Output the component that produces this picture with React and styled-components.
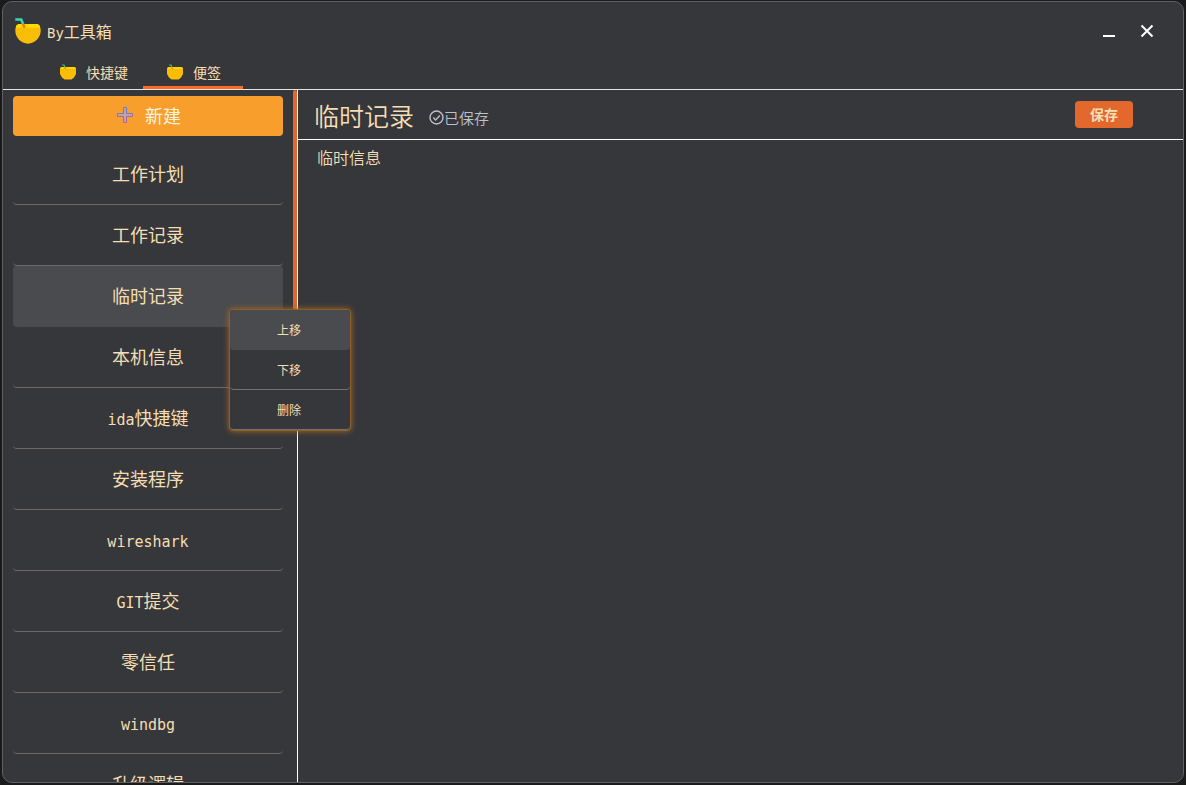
import React, { useState } from "react";
import styled, { createGlobalStyle } from "styled-components";

const c = {
  bg: "#36373a",
  hover: "#4a4b4e",
  wheat: "#f5deb3",
  line: "#6f695f",
  orange: "#e2682e",
};

const Global = createGlobalStyle`
  *, *::before, *::after { box-sizing: border-box; }
  html, body, #root { height: 100%; }
  body {
    margin: 0;
    background: #1b1b1c;
    color: ${c.wheat};
    font: 16px/24px "Noto Sans CJK SC", "Noto Sans", sans-serif;
  }
  #root { padding: 1px 2px 2px; }
  button, textarea { font: inherit; color: inherit; }
  button { border: 0; padding: 0; margin: 0; background: none; cursor: pointer; }
`;

const Window = styled.div`
  position: relative;
  display: flex;
  flex-direction: column;
  height: 100%;
  overflow: hidden;
  background: ${c.bg};
  border: 1px solid #606062;
  border-radius: 10px;
`;

const TitleBar = styled.header`
  display: flex;
  align-items: center;
  flex: none;
  height: 58px;
  padding: 0 17px 0 12px;
`;

const AppName = styled.h1`
  flex: 1;
  margin: 0 0 0 6px;
  font-size: 16px;
  font-weight: 400;
`;

const Latin = styled.span`
  font-family: "DejaVu Sans Mono", monospace;
  font-size: ${(p) => p.$size}px;
  line-height: 1;
`;

const WindowButton = styled.button`
  display: flex;
  align-items: center;
  justify-content: center;
  width: 38px;
  height: 38px;
`;

const Tabs = styled.nav`
  display: flex;
  flex: none;
  padding-left: 40px;
  border-bottom: 1px solid #e4e6e6;
`;

const Tab = styled.button`
  display: flex;
  align-items: center;
  justify-content: center;
  gap: 10px;
  width: 100px;
  height: 29px;
  padding: 0 0 2px 2px;
  font-size: 14px;
  border-bottom: 3px solid ${(p) => (p.$active ? "#ff6b27" : "transparent")};
`;

const Body = styled.div`
  display: flex;
  flex: 1;
  min-height: 0;
`;

const Sidebar = styled.aside`
  display: flex;
  flex: none;
  width: 295px;
  border-right: 1px solid #fff;
`;

const NoteList = styled.div`
  display: flex;
  flex-direction: column;
  flex: 1;
  overflow-y: auto;
  scrollbar-width: none;
  padding: 6px 10px 0;
`;

const ScrollTrack = styled.div`
  width: 4px;
`;

const ScrollThumb = styled.div`
  height: 40%;
  background: ${c.orange};
  border-radius: 2px;
`;

const NewButton = styled.button`
  display: flex;
  align-items: center;
  justify-content: center;
  gap: 12px;
  flex: none;
  height: 40px;
  margin-bottom: 8px;
  padding: 0 0 2px 2px;
  background: #f89e2c;
  border-radius: 4px;
  color: #fff5e2;
  font-size: 18px;
`;

const Note = styled.button`
  flex: none;
  height: 61px;
  padding-bottom: 2px;
  font-size: 18px;
  border-radius: 4px;
  border-bottom: 1px solid ${(p) => (p.$active ? c.hover : c.line)};
  background: ${(p) => (p.$active ? c.hover : "transparent")};
`;

const Editor = styled.main`
  display: flex;
  flex-direction: column;
  flex: 1;
  min-width: 0;
`;

const EditorBar = styled.div`
  display: flex;
  align-items: center;
  flex: none;
  height: 50px;
  padding: 0 50px 0 16px;
  border-bottom: 1px solid #fff;
`;

const NoteTitle = styled.h2`
  margin: 0;
  font-size: 25px;
  line-height: 36px;
  font-weight: 350;
`;

const Status = styled.div`
  display: flex;
  align-items: center;
  flex: 1;
  margin-left: 15px;
  padding-top: 6px;
  color: #bcc0ca;
  font-size: 15px;
  font-weight: 350;
`;

const SaveButton = styled.button`
  width: 58px;
  height: 27px;
  padding-bottom: 2px;
  border-radius: 4px;
  background: ${c.orange};
  font-size: 14px;
  font-weight: 700;
`;

const Content = styled.textarea`
  flex: 1;
  padding: 5px 19px;
  border: 0;
  outline: 0;
  resize: none;
  background: transparent;
  font-weight: 350;
`;

const Menu = styled.div`
  position: absolute;
  left: 226px;
  top: 307px;
  display: flex;
  flex-direction: column;
  width: 122px;
  padding: 1px;
  background: ${c.bg};
  border-radius: 4px;
  box-shadow: inset 0 0 0 1px #8a5f30, 0 0 6px #a96a24;
`;

const MenuItem = styled.button`
  height: 40px;
  padding-right: 2px;
  font-size: 12px;
  border-radius: 4px;
  border-bottom: 1px solid ${(p) => (p.$active ? c.hover : "#77726b")};
  background: ${(p) => (p.$active ? c.hover : "transparent")};
`;

function Logo() {
  return (
    <svg width="26" height="26" viewBox="0 0 26 26" aria-hidden="true">
      <path d="M1.600 7h22.800c.9 2 1.300 3.600 1.300 5.600C25.700 19.800 20 25.700 13 25.700S.3 19.800.3 12.600C.3 10.600.7 9 1.600 7z" fill="#f8bd04" />
      <path d="M3.200 6h19.600c1.400.8 2 2.200 2.300 3.800H.9C1.200 8.200 1.800 6.800 3.200 6z" fill="#ffdc00" />
      <path d="M.3 1.500h5.900l1.900 4.500" fill="none" stroke="#35d9b5" strokeWidth="2.600" />
      <path d="M7.900 5.800l1.700 4" fill="none" stroke="#f07c12" strokeWidth="2.600" />
    </svg>
  );
}

function TabIcon() {
  return (
    <svg width="16" height="16" viewBox="0 0 16 16" aria-hidden="true">
      <path d="M1 3h14l1 2v5l-2 3.500-2.500 2h-7L2 13.500 0 10V5z" fill="#f8bd04" />
      <path d="M1 3h14l1 2H0z" fill="#ffd500" />
      <path d="M2.200 1h1.700l1 2" fill="none" stroke="#35c9a0" strokeWidth="1.200" />
      <path d="M4.500 3l1 2.200" fill="none" stroke="#e88a12" strokeWidth="1.300" />
    </svg>
  );
}

function PlusIcon() {
  return (
    <svg width="16" height="16" viewBox="0 0 16 16" aria-hidden="true">
      <defs>
        <linearGradient id="plusEdge" x1="0" y1="0" x2="0" y2="1">
          <stop offset="0" stopColor="#6a80bd" />
          <stop offset="1" stopColor="#c659a5" />
        </linearGradient>
      </defs>
      <path d="M6.500.5h3v6h6v3h-6v6h-3v-6h-6v-3h6z" fill="#b9a6ad" stroke="url(#plusEdge)" />
    </svg>
  );
}

function CheckCircle() {
  return (
    <svg width="15" height="15" viewBox="0 0 15 15" fill="none" stroke="currentColor" strokeWidth="1.400" aria-hidden="true">
      <circle cx="7.500" cy="7.500" r="6.500" />
      <path d="M4.300 7.600l2.300 2.300 4.200-4.400" />
    </svg>
  );
}

const notes = [
  { cjk: "工作计划" },
  { cjk: "工作记录" },
  { cjk: "临时记录" },
  { cjk: "本机信息" },
  { latin: "ida", cjk: "快捷键" },
  { cjk: "安装程序" },
  { latin: "wireshark" },
  { latin: "GIT", cjk: "提交" },
  { cjk: "零信任" },
  { latin: "windbg" },
  { cjk: "升级逻辑" },
];

export default function App() {
  const [text, setText] = useState("临时信息");
  const [selected, setSelected] = useState(2);
  return (
    <>
      <Global />
      <Window>
        <TitleBar>
          <Logo />
          <AppName>
            <Latin $size={14}>By</Latin>工具箱
          </AppName>
          <WindowButton aria-label="最小化">
            <svg width="14" height="14" viewBox="0 0 14 14">
              <path d="M1 12h12" stroke="#fff" strokeWidth="2" />
            </svg>
          </WindowButton>
          <WindowButton aria-label="关闭">
            <svg width="14" height="14" viewBox="0 0 14 14">
              <path d="M1.500 1.500l11 11M12.500 1.500l-11 11" stroke="#fff" strokeWidth="2" />
            </svg>
          </WindowButton>
        </TitleBar>
        <Tabs>
          <Tab>
            <TabIcon />
            快捷键
          </Tab>
          <Tab $active>
            <TabIcon />
            便签
          </Tab>
        </Tabs>
        <Body>
          <Sidebar>
            <NoteList>
              <NewButton>
                <PlusIcon />
                新建
              </NewButton>
              {notes.map((n, i) => (
                <Note key={i} $active={i === selected} onClick={() => setSelected(i)}>
                  {n.latin && <Latin $size={15}>{n.latin}</Latin>}
                  {n.cjk}
                </Note>
              ))}
            </NoteList>
            <ScrollTrack>
              <ScrollThumb />
            </ScrollTrack>
          </Sidebar>
          <Editor>
            <EditorBar>
              <NoteTitle>临时记录</NoteTitle>
              <Status>
                <CheckCircle />
                已保存
              </Status>
              <SaveButton>保存</SaveButton>
            </EditorBar>
            <Content aria-label="便签内容" value={text} onChange={(e) => setText(e.target.value)} />
          </Editor>
        </Body>
        <Menu role="menu">
          <MenuItem role="menuitem" $active>上移</MenuItem>
          <MenuItem role="menuitem">下移</MenuItem>
          <MenuItem role="menuitem">删除</MenuItem>
        </Menu>
      </Window>
    </>
  );
}
